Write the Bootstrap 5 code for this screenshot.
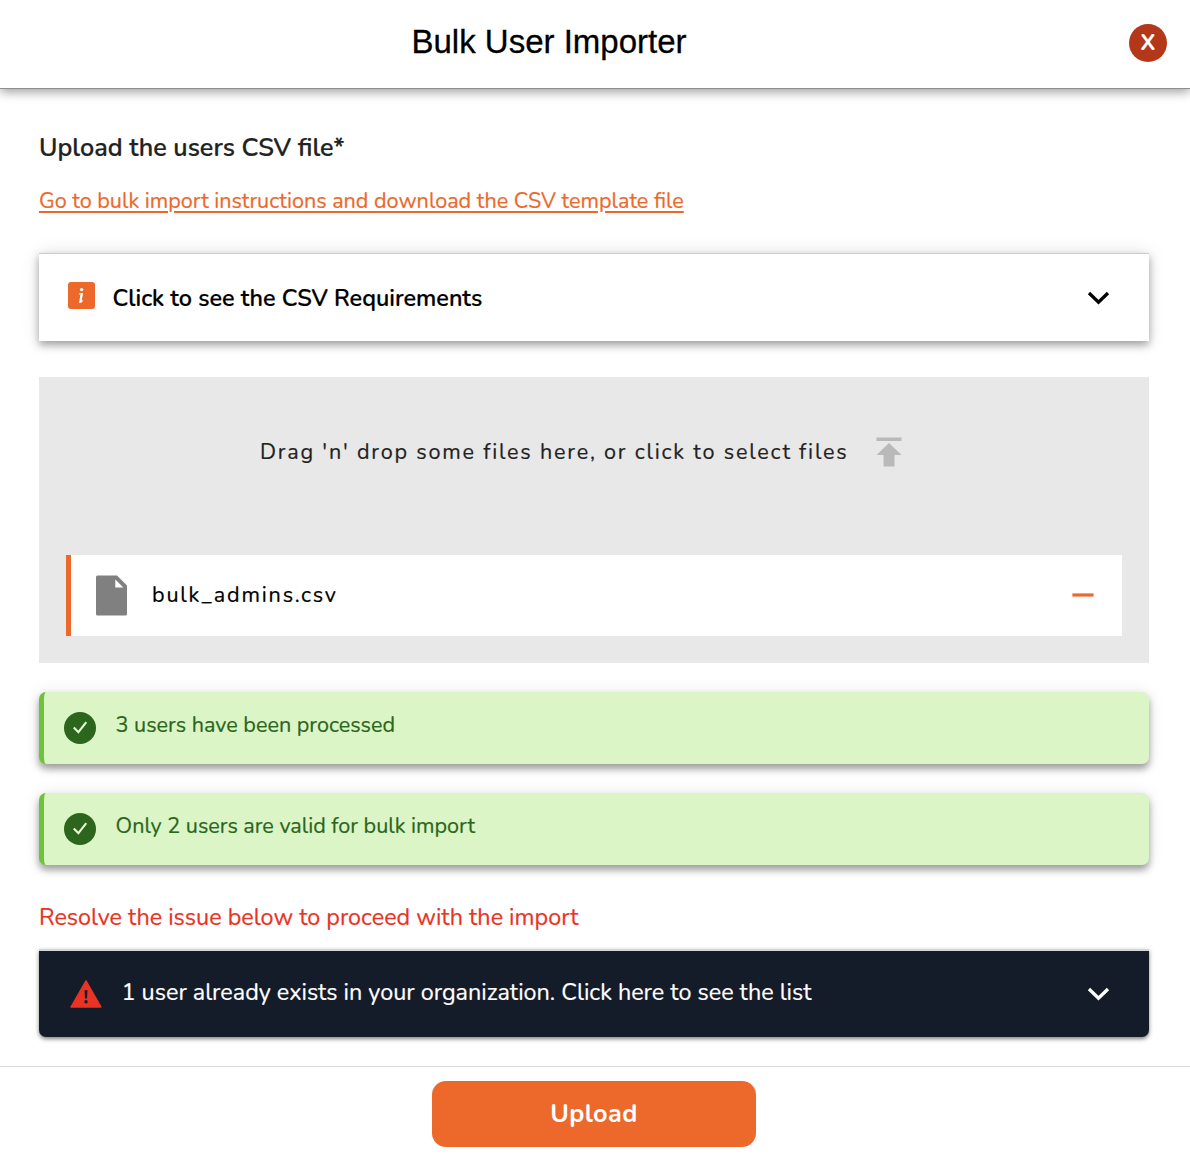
<!DOCTYPE html>
<html lang="en">
<head>
<meta charset="utf-8">
<meta name="viewport" content="width=device-width, initial-scale=1">
<title>Bulk User Importer</title>
<link href="https://cdn.jsdelivr.net/npm/bootstrap@5.3.0/dist/css/bootstrap.min.css" rel="stylesheet">
<style>
  body { font-family: Nunito, Lato, "Open Sans", sans-serif; color: #000; background: #fff; overflow: hidden; -webkit-text-stroke: .2px currentColor; }
  .top-bar { height: 89px; border-bottom: 1px solid #8e8e8e; box-shadow: 0 3px 10px rgba(0,0,0,.38); padding: 0 24px 3px 0; }
  .top-title { font: 400 33px/40px "Liberation Sans", Arial, sans-serif; margin: 0 0 2px 411.5px; -webkit-text-stroke: .3px #000; }
  .close-btn { width: 38px; height: 38px; margin-right: -1px; background: #b53719; color: #fff; font-size: 22px; font-weight: 700; line-height: 39px; }
  .page-body { padding: 41px 41px 0 39px; height: 977px; }
  .field-title { font-size: 25.2px; line-height: 36px; font-weight: 600; color: #222; margin-bottom: 20px; }
  .help-link { font-size: 21.6px; line-height: 30px; color: #ec692b; text-underline-offset: 2.5px; margin-bottom: 37px; }
  .req-panel { height: 88px; border-top: 1px solid #ccc; box-shadow: 0 4px 8px rgba(0,0,0,.34), 0 0 18px rgba(0,0,0,.1); padding: 0 39px 0 29px; margin-bottom: 36px; }
  .req-text { font-size: 23.4px; font-weight: 600; margin: 2px 0 0 17.5px; }
  .info-icon { margin-bottom: 4px; }
  .drop-zone { height: 286px; background: #e8e8e8; padding: 0 27px 27px; margin-bottom: 29px; }
  .drop-hint { height: 150px; padding-left: 194px; margin-bottom: 28px; font-size: 21.6px; color: #222; }
  .hint-text { letter-spacing: 1.8px; }
  .up-icon { margin: 0 0 0 27.5px; }
  .file-row { height: 81px; border-left: 5px solid #ec692b; padding: 0 28px 0 25px; font-size: 21.6px; }
  .file-name { letter-spacing: 1.8px; margin-left: 25px; }
  .minus-icon { margin-bottom: 2px; }
  .ok-note { height: 72px; background: #dbf5c6; color: #2b661c; border-left: 5px solid #6bc43a; border-radius: 7px; box-shadow: 0 5px 7px rgba(0,0,0,.34), 0 1px 16px rgba(0,0,0,.11); padding-left: 20px; margin-bottom: 29px; font-size: 21.6px; }
  .ok-text { margin: 0 0 6px 19.6px; }
  .issue-text { font-size: 23.4px; line-height: 34px; color: #e93323; margin: 35px 0 15px; }
  .dup-panel { height: 88px; background: #141b29; color: #fff; border-top: 2px solid #d5d6d9; border-radius: 0 0 7px 7px; box-shadow: 0 2px 4px rgba(0,0,0,.5); padding: 0 39px 0 31px; }
  .dup-text { font-size: 23.4px; margin: 0 0 3px 19.5px; }
  .bottom-bar { height: 92px; border-top: 1px solid #dedede; padding: 14px 2px 0 0; }
  .upload-btn, .upload-btn:hover { width: 324px; height: 66px; border: 0; border-radius: 14px; background: #ec692b; color: #fff; font-size: 25.2px; font-weight: 700; letter-spacing: .4px; -webkit-text-stroke: 0; }
  .upload-btn { padding: 2px 0 0; }
</style>
</head>
<body>
<header class="top-bar d-flex align-items-center justify-content-between">
  <h1 class="top-title">Bulk User Importer</h1>
  <div class="close-btn rounded-circle text-center" role="button">X</div>
</header>

<main class="page-body">
  <div class="field-title"><span>Upload the users CSV file*</span></div>
  <div class="help-link"><a href="#" class="text-reset">Go to bulk import instructions and download the CSV template file</a></div>

  <section class="req-panel d-flex align-items-center">
    <svg class="info-icon" width="27" height="27" viewBox="0 0 27 27"><rect width="27" height="27" rx="3" fill="#ec692b"/><circle cx="13.6" cy="7.6" r="1.7" fill="#fff"/><path d="M10.9 12.1 14.6 11.3 13 19.3 15 18.9M11 20.5 14 19.8" fill="none" stroke="#fff" stroke-width="1"/><path d="M13.6 11.5 12.2 20.3" stroke="#fff" stroke-width="2"/></svg>
    <span class="req-text">Click to see the CSV Requirements</span>
    <svg class="ms-auto" width="23" height="14" viewBox="0 0 23 14"><path d="M2 2 11.5 11.3 21 2" fill="none" stroke="#000" stroke-width="3.3"/></svg>
  </section>

  <section class="drop-zone">
    <div class="drop-hint d-flex align-items-center">
      <span class="hint-text">Drag 'n' drop some files here, or click to select files</span>
      <svg class="up-icon" width="26" height="30" viewBox="0 0 26 30"><path d="M.5.5h25V4H.5zM13 6 25.5 18H18.500V29.500H7.500V18H.5z" fill="#b9b9b9"/></svg>
    </div>
    <div class="file-row bg-white d-flex align-items-center">
      <svg width="31" height="41" viewBox="0 0 31 41"><path d="M1.500 .5H21L31 10.500V39q0 1.500-1.500 1.500H1.500Q0 40.500 0 39V2Q0 .5 1.500.5z" fill="#808080"/><path d="M19.300 4.500V12.500H27.300z" fill="#fff"/></svg>
      <span class="file-name">bulk_admins.csv</span>
      <svg class="minus-icon ms-auto" width="22" height="4" viewBox="0 0 22 4"><rect x=".4" y=".4" width="21.200" height="3.200" fill="#ec692b"/></svg>
    </div>
  </section>

  <div class="ok-note d-flex align-items-center">
    <svg width="32" height="32" viewBox="0 0 32 32"><circle cx="16" cy="16" r="16" fill="#2b661c"/><path d="M9.800 15.500 14.400 20.200 22.300 10.200" fill="none" stroke="#e6fbd5" stroke-width="2.100"/></svg>
    <span class="ok-text">3 users have been processed</span>
  </div>
  <div class="ok-note d-flex align-items-center">
    <svg width="32" height="32" viewBox="0 0 32 32"><circle cx="16" cy="16" r="16" fill="#2b661c"/><path d="M9.800 15.500 14.400 20.200 22.300 10.200" fill="none" stroke="#e6fbd5" stroke-width="2.100"/></svg>
    <span class="ok-text">Only 2 users are valid for bulk import</span>
  </div>

  <div class="issue-text"><span>Resolve the issue below to proceed with the import</span></div>
  <section class="dup-panel d-flex align-items-center">
    <svg width="32" height="28" viewBox="0 0 32 28"><path d="M16 .8 31 27H1z" fill="#e93323" stroke="#e93323" stroke-width="1.400" stroke-linejoin="round"/><path d="M14.500 10.300h3l-.5 8.200h-2z" fill="#141b29"/><circle cx="16" cy="21.800" r="1.700" fill="#141b29"/></svg>
    <span class="dup-text">1 user already exists in your organization. Click here to see the list</span>
    <svg class="ms-auto" width="23" height="14" viewBox="0 0 23 14"><path d="M2 2 11.500 11.300 21 2" fill="none" stroke="#fff" stroke-width="3.300"/></svg>
  </section>
</main>

<footer class="bottom-bar text-center">
  <button type="button" class="btn upload-btn">Upload</button>
</footer>
<script src="https://cdn.jsdelivr.net/npm/bootstrap@5.3.0/dist/js/bootstrap.bundle.min.js"></script>
</body>
</html>
